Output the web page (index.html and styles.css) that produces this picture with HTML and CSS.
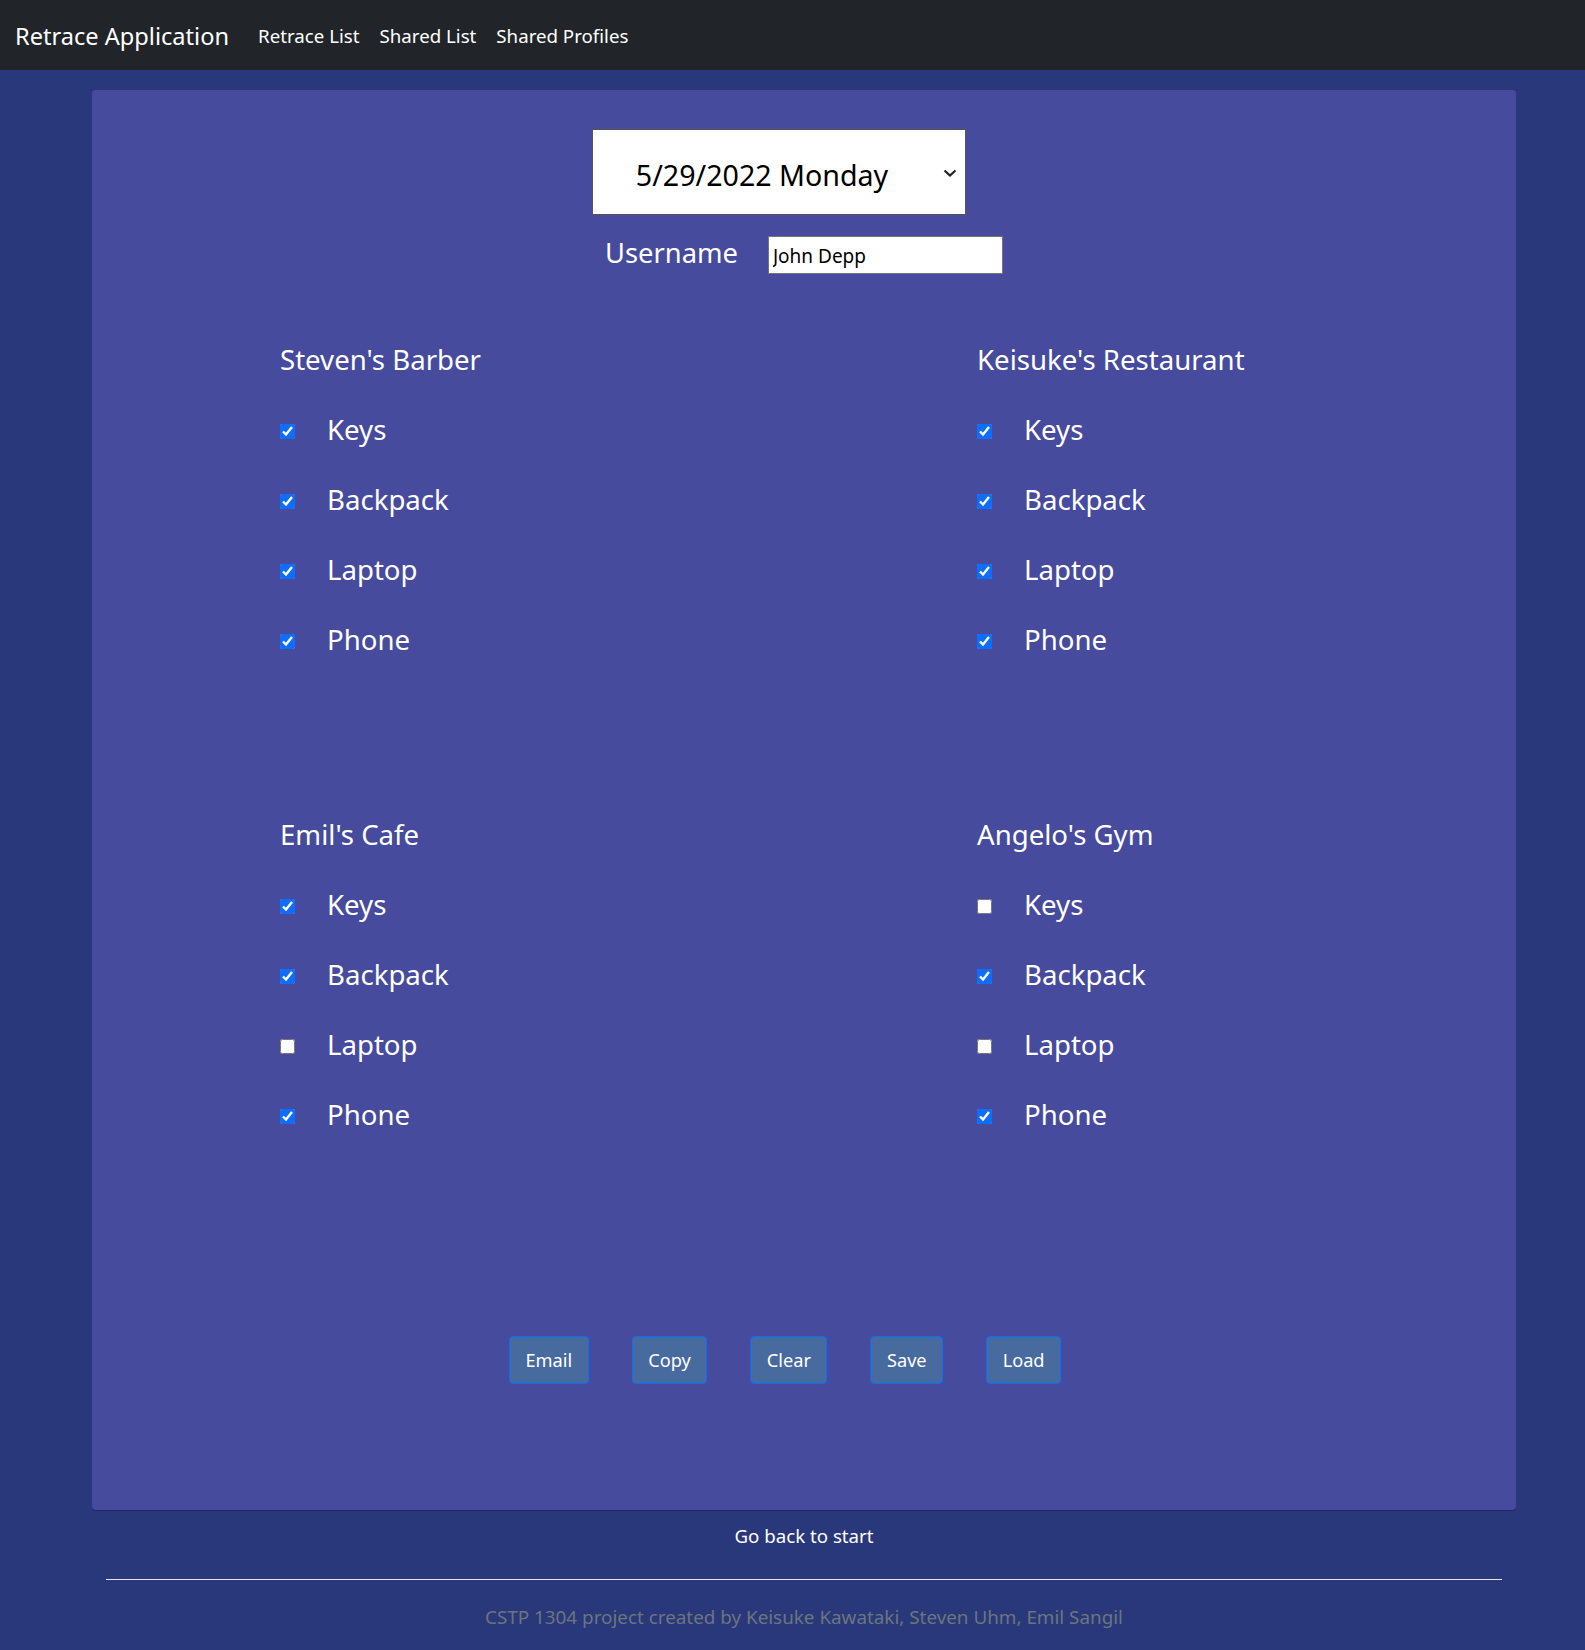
FILE: index.html
```html
<!DOCTYPE html>
<html lang="en">
<head>
<meta charset="utf-8">
<title>Retrace Application</title>
<link rel="stylesheet" href="styles.css">
</head>
<body>
<nav class="navbar">
  <a class="brand" href="#">Retrace Application</a>
  <ul class="nav-links">
    <li><a href="#">Retrace List</a></li>
    <li><a href="#">Shared List</a></li>
    <li><a href="#">Shared Profiles</a></li>
  </ul>
</nav>
<div class="page">
  <main class="card">
    <div class="date-row">
      <div class="select">
        <span class="select-text">5/29/2022 Monday</span>
        <svg class="chevron" width="14" height="8" viewBox="0 0 14 8"><path d="M1.5 1.5 L7 6.5 L12.5 1.5" fill="none" stroke="#222" stroke-width="2.2"/></svg>
      </div>
    </div>
    <div class="user-row">
      <label class="user-label" for="username">Username</label>
      <input class="user-input" id="username" type="text" value="John Depp">
    </div>
    <div class="places">
      <section class="place">
        <h2 class="place-title">Steven's Barber</h2>
        <label class="item"><input type="checkbox" checked><span>Keys</span></label>
        <label class="item"><input type="checkbox" checked><span>Backpack</span></label>
        <label class="item"><input type="checkbox" checked><span>Laptop</span></label>
        <label class="item"><input type="checkbox" checked><span>Phone</span></label>
      </section>
      <section class="place">
        <h2 class="place-title">Keisuke's Restaurant</h2>
        <label class="item"><input type="checkbox" checked><span>Keys</span></label>
        <label class="item"><input type="checkbox" checked><span>Backpack</span></label>
        <label class="item"><input type="checkbox" checked><span>Laptop</span></label>
        <label class="item"><input type="checkbox" checked><span>Phone</span></label>
      </section>
      <section class="place">
        <h2 class="place-title">Emil's Cafe</h2>
        <label class="item"><input type="checkbox" checked><span>Keys</span></label>
        <label class="item"><input type="checkbox" checked><span>Backpack</span></label>
        <label class="item"><input type="checkbox"><span>Laptop</span></label>
        <label class="item"><input type="checkbox" checked><span>Phone</span></label>
      </section>
      <section class="place">
        <h2 class="place-title">Angelo's Gym</h2>
        <label class="item"><input type="checkbox"><span>Keys</span></label>
        <label class="item"><input type="checkbox" checked><span>Backpack</span></label>
        <label class="item"><input type="checkbox"><span>Laptop</span></label>
        <label class="item"><input type="checkbox" checked><span>Phone</span></label>
      </section>
    </div>
    <div class="actions">
      <button class="btn" type="button">Email</button>
      <button class="btn" type="button">Copy</button>
      <button class="btn" type="button">Clear</button>
      <button class="btn" type="button">Save</button>
      <button class="btn" type="button">Load</button>
    </div>
  </main>
  <div class="back"><a href="#">Go back to start</a></div>
  <hr class="divider">
  <footer class="footer">CSTP 1304 project created by Keisuke Kawataki, Steven Uhm, Emil Sangil</footer>
</div>
</body>
</html>
```
FILE: styles.css
```css
* { box-sizing: border-box; }

html, body {
  margin: 0;
  padding: 0;
}

body {
  background: #29387b;
  font-family: "Noto Sans", "Open Sans", sans-serif;
  color: #fff;
  min-height: 1650px;
}

a { color: inherit; text-decoration: none; }

.navbar {
  height: 70px;
  background: #212529;
  display: flex;
  align-items: center;
  padding: 0 15px;
}

.brand {
  font-size: 23.6px;
  color: #fff;
  margin-right: 29px;
  line-height: 1;
  padding-top: 3px;
}

.nav-links {
  list-style: none;
  margin: 0;
  padding: 1px 0 0;
  display: flex;
  gap: 20px;
  font-size: 18.7px;
}

.page {
  width: 1424px;
  margin-left: 92px;
  padding-top: 20px;
}

.card {
  background: #464b9e;
  border-radius: 4px;
  box-shadow: 0 1px 0 rgba(0,0,0,0.25);
  padding: 39px 0 126px;
}

.date-row {
  display: flex;
  justify-content: center;
  padding-right: 50px;
}

.select {
  width: 374px;
  height: 86px;
  background: #fff;
  border: 1px solid #555;
  display: flex;
  align-items: center;
  color: #000;
}

.select-text {
  flex: 1;
  text-align: center;
  font-size: 28.6px;
  padding-right: 6px;
  padding-top: 4px;
}

.chevron {
  margin-right: 8px;
  margin-left: 6px;
  margin-top: 2px;
}

.user-row {
  margin-top: 21px;
  height: 38px;
  display: flex;
  justify-content: center;
  align-items: center;
  gap: 30px;
}

.user-label {
  font-size: 27.3px;
  line-height: 30px;
  margin-bottom: 4px;
}

.user-input {
  width: 235px;
  height: 38px;
  border: 1px solid #767676;
  font-family: "Noto Sans", sans-serif;
  font-size: 19px;
  padding: 2px 4px 0;
  color: #000;
  background: #fff;
  border-radius: 0;
}

.places {
  margin-top: 50px;
  padding-left: 188px;
  display: grid;
  grid-template-columns: 697px 1fr;
  row-gap: 125px;
}

.place-title {
  margin: 0;
  height: 70px;
  line-height: 70px;
  font-size: 27.6px;
  font-weight: 400;
}

.item {
  display: flex;
  align-items: center;
  height: 70px;
  font-size: 27.6px;
}

.item input {
  width: 15px;
  height: 15px;
  margin: 5px 32px 0 0;
  accent-color: #0d6efd;
}

.actions {
  margin-top: 187px;
  display: flex;
  justify-content: center;
  gap: 43px;
  padding-right: 38px;
}

.btn {
  height: 48px;
  padding: 0 15.5px;
  background: #476a9f;
  border: 1px solid #0d6efd;
  border-radius: 4px;
  color: #fff;
  font-family: "Noto Sans", sans-serif;
  font-size: 18.2px;
}

.back {
  text-align: center;
  margin-top: 12px;
  font-size: 18.7px;
  line-height: 27px;
}

.divider {
  margin: 30px 14px 0;
  border: 0;
  border-top: 1.5px solid #e6e6ef;
}

.footer {
  text-align: center;
  color: #6c757d;
  font-size: 18.85px;
  margin-top: 24px;
}
```
